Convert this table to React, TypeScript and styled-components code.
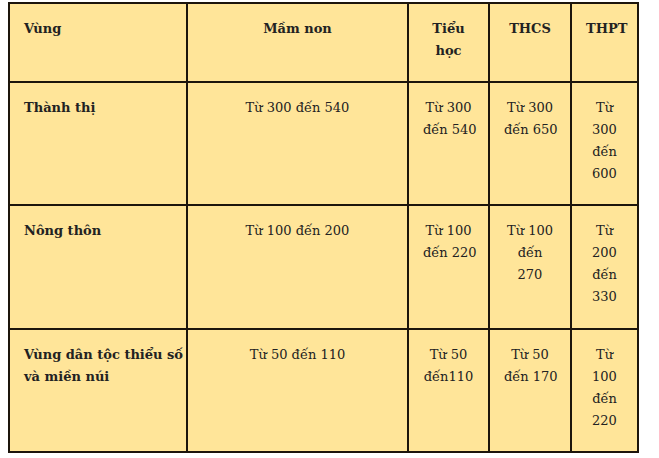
import styled, { createGlobalStyle } from 'styled-components'

const GlobalStyle = createGlobalStyle`
  html, body {
    margin: 0;
    padding: 0;
    background: #ffffff;
  }
  body {
    font-family: 'DejaVu Serif', 'Liberation Serif', serif;
  }
`

const Page = styled.div`
  padding: 2px 0 0 8px;
`

const Table = styled.table`
  border-collapse: collapse;
  table-layout: fixed;
  width: 631px;
  background: #ffe599;
  color: #222222;
  font-size: 13px;
  line-height: 22px;
`

const Row = styled.tr<{ $h: number }>`
  height: ${({ $h }) => $h}px;
`

const HeadCell = styled.th<{ $align?: 'left' | 'center' }>`
  border: 2px solid #1c150c;
  padding: 14px 14px 10px;
  vertical-align: top;
  text-align: ${({ $align }) => $align ?? 'center'};
  font-weight: 700;
  white-space: pre;
`

const Cell = styled.td<{ $bold?: boolean }>`
  border: 2px solid #1c150c;
  padding: 14px 14px 10px;
  vertical-align: top;
  text-align: ${({ $bold }) => ($bold ? 'left' : 'center')};
  font-weight: ${({ $bold }) => ($bold ? 700 : 400)};
  white-space: pre;
`

const columns = [178, 221, 81, 82, 67]

const headers = ['Mầm non', 'Tiểu\nhọc', 'THCS', 'THPT']

const rows = [
  {
    region: 'Thành thị',
    h: 123,
    values: ['Từ 300 đến 540', 'Từ 300\nđến 540', 'Từ 300\nđến 650', 'Từ\n300\nđến\n600'],
  },
  {
    region: 'Nông thôn',
    h: 124,
    values: ['Từ 100 đến 200', 'Từ 100\nđến 220', 'Từ 100\nđến\n270', 'Từ\n200\nđến\n330'],
  },
  {
    region: 'Vùng dân tộc thiểu số\nvà miền núi',
    h: 123,
    values: ['Từ 50 đến 110', 'Từ 50\nđến110', 'Từ 50\nđến 170', 'Từ\n100\nđến\n220'],
  },
]

export default function App() {
  return (
    <>
      <GlobalStyle />
      <Page>
        <Table>
          <colgroup>
            {columns.map((w, i) => (
              <col key={i} style={{ width: w }} />
            ))}
          </colgroup>
          <thead>
            <Row $h={79}>
              <HeadCell $align="left">Vùng</HeadCell>
              {headers.map((h) => (
                <HeadCell key={h}>{h}</HeadCell>
              ))}
            </Row>
          </thead>
          <tbody>
            {rows.map((r) => (
              <Row key={r.region} $h={r.h}>
                <Cell $bold>{r.region}</Cell>
                {r.values.map((v, i) => (
                  <Cell key={i}>{v}</Cell>
                ))}
              </Row>
            ))}
          </tbody>
        </Table>
      </Page>
    </>
  )
}
